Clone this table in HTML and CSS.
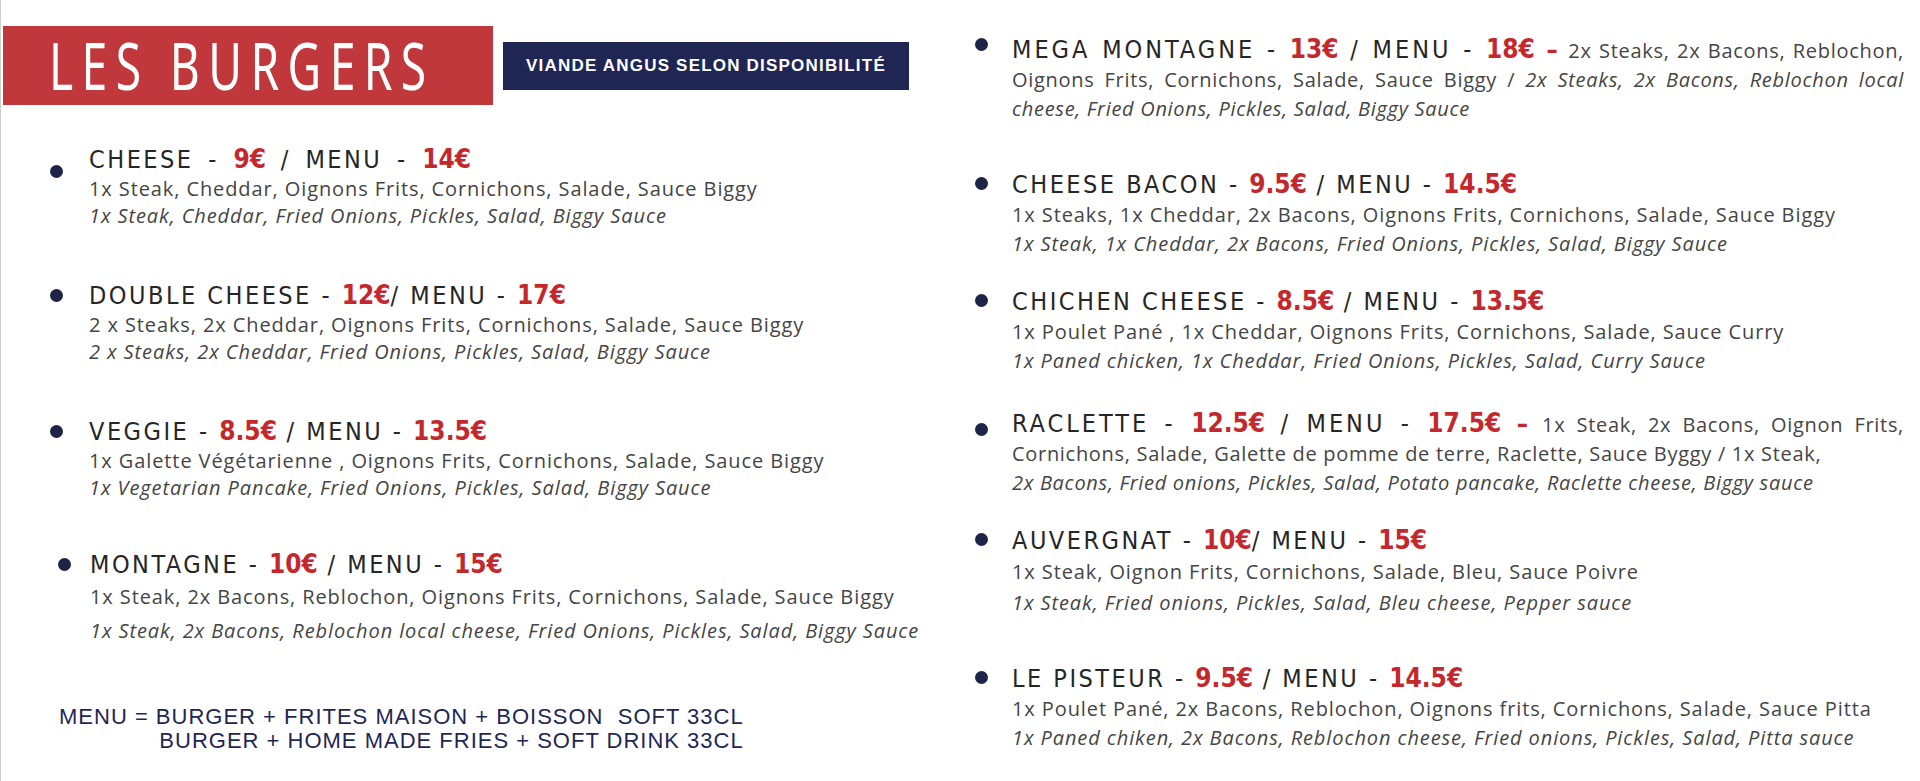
FILE: index.html
```html
<!DOCTYPE html>
<html lang="fr">
<head>
<meta charset="utf-8">
<title>Les Burgers</title>
<link rel="stylesheet" href="styles.css">
</head>
<body>
<div class="page">
  <section class="col col-left">
    <header class="head">
      <h1 class="brand"><span class="brand-text">LES BURGERS</span></h1>
      <div class="note">VIANDE ANGUS SELON DISPONIBILITÉ</div>
    </header>

    <div class="items">
      <div class="item item-first">
        <span class="dot dot-low"></span>
        <div class="body">
          <div class="title title-airy">CHEESE - <span class="price">9€</span> / MENU - <span class="price">14€</span></div>
          <div class="desc">1x Steak, Cheddar, Oignons Frits, Cornichons, Salade, Sauce Biggy</div>
          <div class="desc en">1x Steak, Cheddar, Fried Onions, Pickles, Salad, Biggy Sauce</div>
        </div>
      </div>

      <div class="item">
        <span class="dot"></span>
        <div class="body">
          <div class="title">DOUBLE CHEESE - <span class="price">12€</span>/ MENU - <span class="price">17€</span></div>
          <div class="desc">2 x Steaks, 2x Cheddar, Oignons Frits, Cornichons, Salade, Sauce Biggy</div>
          <div class="desc en">2 x Steaks, 2x Cheddar, Fried Onions, Pickles, Salad, Biggy Sauce</div>
        </div>
      </div>

      <div class="item">
        <span class="dot"></span>
        <div class="body">
          <div class="title">VEGGIE - <span class="price">8.5€</span> / MENU - <span class="price">13.5€</span></div>
          <div class="desc">1x Galette Végétarienne , Oignons Frits, Cornichons, Salade, Sauce Biggy</div>
          <div class="desc en">1x Vegetarian Pancake, Fried Onions, Pickles, Salad, Biggy Sauce</div>
        </div>
      </div>

      <div class="item item-shift">
        <span class="dot"></span>
        <div class="body body-loose">
          <div class="title">MONTAGNE - <span class="price">10€</span> / MENU - <span class="price">15€</span></div>
          <div class="desc">1x Steak, 2x Bacons, Reblochon, Oignons Frits, Cornichons, Salade, Sauce Biggy</div>
          <div class="desc en">1x Steak, 2x Bacons, Reblochon local cheese, Fried Onions, Pickles, Salad, Biggy Sauce</div>
        </div>
      </div>
    </div>

    <div class="formula">
      <span class="formula-label">MENU = </span>
      <div class="formula-lines">
        <div>BURGER + FRITES MAISON + BOISSON&nbsp; SOFT 33CL</div>
        <div>BURGER + HOME MADE FRIES + SOFT DRINK 33CL</div>
      </div>
    </div>
  </section>

  <section class="col col-right">
    <div class="item r-item">
      <span class="dot dot-up"></span>
      <div class="body para">
        <div class="just"><span class="title wide">MEGA MONTAGNE - <span class="price">13€</span> / MENU - <span class="price">18€</span> <span class="dash">–</span></span> 2x Steaks, 2x Bacons, Reblochon,</div>
        <div class="just">Oignons Frits, Cornichons, Salade, Sauce Biggy / <i>2x Steaks, 2x Bacons, Reblochon local</i></div>
        <div><i>cheese, Fried Onions, Pickles, Salad, Biggy Sauce</i></div>
      </div>
    </div>

    <div class="item r-item gap-l">
      <span class="dot"></span>
      <div class="body">
        <div class="title">CHEESE BACON - <span class="price">9.5€</span> / MENU - <span class="price">14.5€</span></div>
        <div class="desc">1x Steaks, 1x Cheddar, 2x Bacons, Oignons Frits, Cornichons, Salade, Sauce Biggy</div>
        <div class="desc en">1x Steak, 1x Cheddar, 2x Bacons, Fried Onions, Pickles, Salad, Biggy Sauce</div>
      </div>
    </div>

    <div class="item r-item gap-s">
      <span class="dot"></span>
      <div class="body">
        <div class="title">CHICHEN CHEESE - <span class="price">8.5€</span> / MENU - <span class="price">13.5€</span></div>
        <div class="desc">1x Poulet Pané , 1x Cheddar, Oignons Frits, Cornichons, Salade, Sauce Curry</div>
        <div class="desc en">1x Paned chicken, 1x Cheddar, Fried Onions, Pickles, Salad, Curry Sauce</div>
      </div>
    </div>

    <div class="item r-item gap-m">
      <span class="dot dot-down"></span>
      <div class="body para">
        <div class="just"><span class="title wide">RACLETTE - <span class="price">12.5€</span> / MENU - <span class="price">17.5€</span> <span class="dash">–</span></span> 1x Steak, 2x Bacons, Oignon Frits,</div>
        <div>Cornichons, Salade, Galette de pomme de terre, Raclette, Sauce Byggy / 1x Steak,</div>
        <div><i>2x Bacons, Fried onions, Pickles, Salad, Potato pancake, Raclette cheese, Biggy sauce</i></div>
      </div>
    </div>

    <div class="item r-item gap-s">
      <span class="dot"></span>
      <div class="body">
        <div class="title">AUVERGNAT - <span class="price">10€</span>/ MENU - <span class="price">15€</span></div>
        <div class="desc desc-loose">1x Steak, Oignon Frits, Cornichons, Salade, Bleu, Sauce Poivre</div>
        <div class="desc en desc-loose">1x Steak, Fried onions, Pickles, Salad, Bleu cheese, Pepper sauce</div>
      </div>
    </div>

    <div class="item r-item gap-xl">
      <span class="dot"></span>
      <div class="body">
        <div class="title">LE PISTEUR - <span class="price">9.5€</span> / MENU - <span class="price">14.5€</span></div>
        <div class="desc">1x Poulet Pané, 2x Bacons, Reblochon, Oignons frits, Cornichons, Salade, Sauce Pitta</div>
        <div class="desc en">1x Paned chiken, 2x Bacons, Reblochon cheese, Fried onions, Pickles, Salad, Pitta sauce</div>
      </div>
    </div>
  </section>
</div>
</body>
</html>
```

FILE: styles.css
```css
html, body {
  margin: 0;
  padding: 0;
  background: #ffffff;
}

.page {
  display: grid;
  grid-template-columns: 960px 1fr;
  width: 1920px;
  height: 781px;
  box-sizing: border-box;
  border-left: 1px solid #cfcfcf;
  font-family: "Open Sans", "Noto Sans", sans-serif;
  color: #454545;
  overflow: hidden;
}

.col-left {
  display: flex;
  flex-direction: column;
  padding-top: 26px;
}

.head {
  display: flex;
  align-items: center;
  gap: 10px;
  padding-left: 2px;
}

.brand {
  margin: 0;
  width: 490px;
  height: 79px;
  flex: none;
  box-sizing: border-box;
  padding: 0 0 3px 46px;
  display: flex;
  align-items: center;
  background: #c0383b;
  color: #ffffff;
  font-family: "Noto Sans", "Open Sans", sans-serif;
  font-weight: 400;
  font-size: 66px;
  line-height: 1;
}

.brand-text {
  display: inline-block;
  width: 300px;
  white-space: nowrap;
  letter-spacing: 12px;
  transform: scaleX(0.7);
  transform-origin: 0 50%;
}

.note {
  width: 406px;
  height: 48px;
  display: flex;
  align-items: center;
  justify-content: center;
  background: #1f2654;
  color: #ffffff;
  font-family: "Liberation Sans", Arial, sans-serif;
  font-weight: 700;
  font-size: 17px;
  letter-spacing: 1.2px;
}

.items {
  display: flex;
  flex-direction: column;
  gap: 51px;
  margin-top: 39px;
}

.item {
  display: flex;
  align-items: flex-start;
  padding-left: 49px;
}

.item-shift {
  padding-left: 57px;
  margin-top: -3px;
}

.item-shift .dot {
  margin-right: 19px;
}

.dot {
  flex: none;
  width: 13px;
  height: 13px;
  border-radius: 50%;
  background: #1d2448;
  margin-top: 9px;
  margin-right: 26px;
}

.dot-low {
  margin-top: 21px;
}

.title {
  font-family: "DejaVu Sans Condensed", "DejaVu Sans", sans-serif;
  font-size: 25px;
  line-height: 30px;
  letter-spacing: 2.5px;
  color: #262626;
  white-space: nowrap;
}

.title-airy {
  word-spacing: 5px;
}

.price {
  font-weight: 700;
  font-size: 26px;
  letter-spacing: 0;
  color: #c4272c;
}

.dash {
  color: #c4272c;
  font-weight: 700;
}

.desc {
  font-size: 20px;
  line-height: 27px;
  letter-spacing: 0.9px;
  color: #454545;
  white-space: nowrap;
}

.desc.en {
  font-style: italic;
}

.body-loose .desc {
  line-height: 34px;
}

.formula {
  display: flex;
  margin-top: 57px;
  padding-left: 58px;
  font-family: "Liberation Sans", Arial, sans-serif;
  font-size: 22px;
  line-height: 24px;
  color: #1f2654;
  letter-spacing: 1px;
}

.formula-label {
  white-space: pre;
}

.formula-lines {
  text-align: right;
}

/* right column */
.col-right {
  display: flex;
  flex-direction: column;
  padding-top: 35px;
  padding-right: 16px;
}

.r-item {
  padding-left: 14px;
}

.r-item .dot {
  margin-top: 8px;
  margin-right: 24px;
}

.r-item .dot-up {
  margin-top: 3px;
}

.r-item .dot-down {
  margin-top: 14px;
}

.r-item .desc {
  line-height: 29px;
}

.r-item .desc-loose {
  line-height: 31px;
}

.para {
  flex: 1;
  min-width: 0;
  font-size: 20px;
  line-height: 29px;
  letter-spacing: 0.7px;
  color: #454545;
  white-space: nowrap;
}

.para .title {
  line-height: 29px;
}

.just {
  text-align: justify;
  text-align-last: justify;
}

.title.wide {
  letter-spacing: 3px;
}

.title.wide .price {
  letter-spacing: 0;
}

.gap-s { margin-top: 28px; }
.gap-m { margin-top: 34px; }
.gap-l { margin-top: 46px; }
.gap-xl { margin-top: 45px; }
```
